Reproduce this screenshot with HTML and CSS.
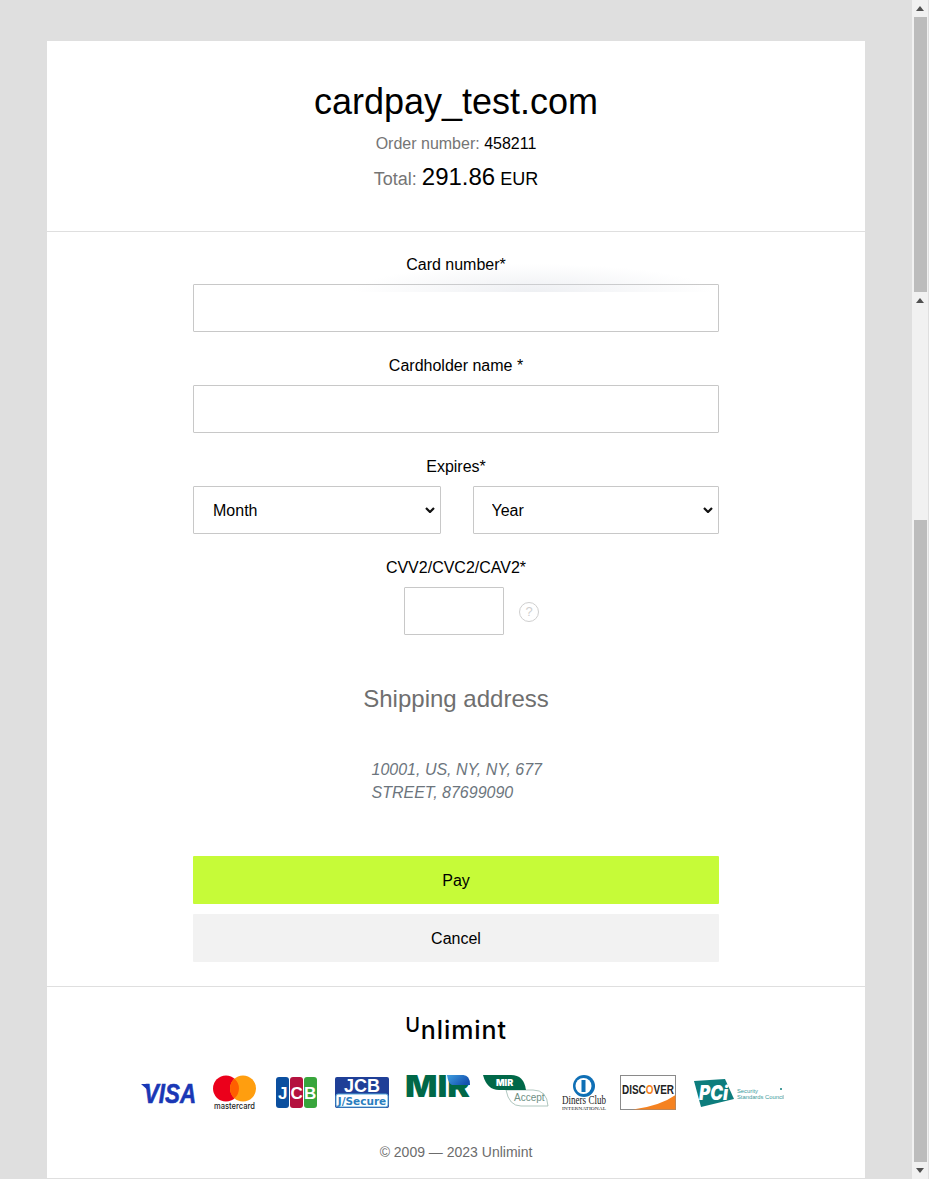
FILE: index.html
```html
<!DOCTYPE html>
<html lang="en">
<head>
    <meta charset="UTF-8">
    <meta name="viewport" content="width=device-width, initial-scale=1.0">
    <title>Unlimint</title>
    <link rel="stylesheet" href="styles.css">
</head>
<body>
    <main class="page">
        <div class="card">
            <header class="head">
                <h1 class="merchant">cardpay_test.com</h1>
                <p class="order"><span class="muted">Order number:</span> 458211</p>
                <p class="total"><span class="muted">Total:</span> <span class="amount">291.86</span> EUR</p>
            </header>

            <form class="pay-form">
                <div class="glow"></div>

                <div class="field">
                    <label class="label" for="card">Card number*</label>
                    <input class="input" type="text" id="card">
                </div>

                <div class="field">
                    <label class="label" for="holder">Cardholder name *</label>
                    <input class="input" type="text" id="holder">
                </div>

                <div class="field">
                    <label class="label" for="month">Expires*</label>
                    <div class="expires">
                        <select class="input select select-month" id="month"><option>Month</option></select>
                        <select class="input select select-year" id="year"><option>Year</option></select>
                    </div>
                </div>

                <div class="field">
                    <label class="label" for="cvv">CVV2/CVC2/CAV2*</label>
                    <div class="cvv-row">
                        <input class="input cvv" type="text" id="cvv">
                        <span class="help">?</span>
                    </div>
                </div>

                <h2 class="ship-title">Shipping address</h2>
                <address class="ship-address">10001, US, NY, NY, 677<br>STREET, 87699090</address>

                <button type="button" class="btn btn-pay">Pay</button>
                <button type="button" class="btn btn-cancel">Cancel</button>
            </form>

            <footer class="foot">
                <div class="brand"><span class="brand-u">U</span>nlimint</div>

                <div class="logos">
                    <svg class="logo" width="58" height="36" viewBox="0 0 58 36">
                        <path d="M0 9 H6 L9 17 Z" fill="#1a37b5"/>
                        <text x="3" y="28" class="t-visa" textLength="52" lengthAdjust="spacingAndGlyphs">VISA</text>
                    </svg>
                    <svg class="logo" width="51" height="36" viewBox="0 0 51 36">
                        <circle cx="14" cy="13.5" r="13" fill="#eb001b"/>
                        <circle cx="31" cy="13.5" r="13" fill="#ff9e0f"/>
                        <path d="M22.5 3.7 a13 13 0 0 1 0 19.6 a13 13 0 0 1 0 -19.6Z" fill="#ff5f00"/>
                        <text x="2" y="34" class="t-mc" textLength="41" lengthAdjust="spacingAndGlyphs">mastercard</text>
                    </svg>
                    <svg class="logo" width="46" height="36" viewBox="0 0 46 36">
                        <rect x="0" y="2" width="13" height="31" rx="3" fill="#0b4f9f"/>
                        <rect x="14" y="2" width="13" height="31" rx="3" fill="#b4123f"/>
                        <rect x="28" y="2" width="13" height="31" rx="3" fill="#38a53c"/>
                        <text x="2" y="23.5" class="t-jcb">J</text>
                        <text x="14.5" y="23.5" class="t-jcb">C</text>
                        <text x="28" y="23.5" class="t-jcb">B</text>
                    </svg>
                    <svg class="logo" width="57" height="36" viewBox="0 0 57 36">
                        <rect x="0" y="2" width="54" height="31" rx="2" fill="#1f3f97"/>
                        <rect x="1" y="19" width="52" height="13" rx="2" fill="#fff" stroke="#4fa5d8"/>
                        <text x="27" y="17" class="t-jcbs">JCB</text>
                        <text x="27" y="29.5" class="t-jcbs2">J/Secure</text>
                    </svg>
                    <svg class="logo" width="65" height="36" viewBox="0 0 65 36">
                        <defs>
                            <linearGradient id="mir-band" x1="0" y1="0" x2="1" y2="0.5">
                                <stop offset="0" stop-color="#3fa0e0"/>
                                <stop offset="1" stop-color="#1450b0"/>
                            </linearGradient>
                        </defs>
                        <text x="0" y="22" class="t-mir" textLength="65" lengthAdjust="spacingAndGlyphs">MIR</text>
                        <path d="M42 0 H58 Q65 0 65 10 H47 Q43 8 42 0 Z" fill="url(#mir-band)"/>
                    </svg>
                    <svg class="logo" width="66" height="36" viewBox="0 0 66 36">
                        <path d="M23 15 H50 Q64 15 65 31 H38 Q26 31 23 15Z" fill="#fff" stroke="#9cb9ae" stroke-width="0.8"/>
                        <path d="M0 0 H28 Q41 0 43 15 H16 Q4 15 0 0Z" fill="#006848"/>
                        <text x="13" y="11" class="t-mirs">MIR</text>
                        <text x="31" y="26" class="t-accept">Accept</text>
                    </svg>
                    <svg class="logo" width="45" height="36" viewBox="0 0 45 36">
                        <circle cx="22" cy="11" r="11" fill="#0f6fb5"/>
                        <circle cx="21.5" cy="11" r="8" fill="#fff"/>
                        <rect x="19.5" y="5" width="4" height="12" fill="#0f6fb5"/>
                        <text x="0" y="29" class="t-diners" textLength="44" lengthAdjust="spacingAndGlyphs">Diners Club</text>
                        <text x="0" y="34.5" class="t-intl" textLength="44" lengthAdjust="spacingAndGlyphs">INTERNATIONAL</text>
                    </svg>
                    <svg class="logo" width="56" height="36" viewBox="0 0 56 36">
                        <rect x="0.5" y="0.5" width="55" height="34" fill="#fff" stroke="#8a8a8a"/>
                        <path d="M13 34.5 Q40 31 55.5 20 V34.5 Z" fill="#f58220"/>
                        <text x="2" y="19" class="t-disc" textLength="52" lengthAdjust="spacingAndGlyphs">DISC<tspan fill="#f58220">O</tspan>VER</text>
                    </svg>
                    <svg class="logo" width="95" height="36" viewBox="0 0 95 36">
                        <path d="M5 6 L36 4 L45 24 L12 32 Z" fill="#0d7d7d"/>
                        <text x="10" y="25" class="t-pci" textLength="29" lengthAdjust="spacingAndGlyphs">PCi</text>
                        <text x="48" y="18" class="t-pcis">Security</text>
                        <text x="48" y="24" class="t-pcis">Standards Council</text>
                        <circle cx="92" cy="14" r="1" fill="#0d7d7d"/>
                    </svg>
                </div>

                <p class="copy">© 2009 — 2023 Unlimint</p>
            </footer>
        </div>
    </main>

    <div class="scroll">
        <div class="arrow-up top"></div>
        <div class="thumb thumb-a"></div>
        <div class="scroll-btn"><div class="arrow-up"></div></div>
        <div class="track"></div>
        <div class="thumb thumb-b"></div>
        <div class="scroll-btn bottom"><div class="arrow-down"></div></div>
    </div>
</body>
</html>
```

FILE: styles.css
```css
html, body {
    height: 1179px;
    margin: 0;
    overflow: hidden;
}

body {
    display: flex;
    background-color: #dfdfdf;
    font-family: "Liberation Sans", Arial, sans-serif;
    color: #000;
}

p, h1, h2 {
    margin: 0;
    font-weight: 400;
}

.page {
    width: 912px;
    padding: 41px 0 1px 47px;
    box-sizing: border-box;
}

.card {
    width: 818px;
    height: 1137px;
    background-color: #fff;
}

.head {
    height: 191px;
    box-sizing: border-box;
    padding-top: 38px;
    text-align: center;
    border-bottom: 1px solid #dfdfdf;
}

.merchant {
    font-size: 36px;
    line-height: 46px;
}

.order {
    font-size: 16px;
    line-height: 24px;
    margin-top: 7px;
}

.total {
    font-size: 18px;
    line-height: 30px;
    margin-top: 6px;
}

.amount {
    font-size: 24px;
}

.muted {
    color: #757575;
}

.pay-form {
    position: relative;
    width: 526px;
    margin: 0 auto;
    padding-top: 23px;
}

.glow {
    position: absolute;
    left: 160px;
    top: 30px;
    width: 360px;
    height: 30px;
    overflow: hidden;
    z-index: 2;
    pointer-events: none;
    background: radial-gradient(ellipse 180px 28px at 50% 100%, rgba(214, 218, 226, 0.42), rgba(255, 255, 255, 0));
}

.field {
    margin-bottom: 24px;
}

.label {
    display: block;
    font-size: 16px;
    line-height: 20px;
    margin-bottom: 9px;
    text-align: center;
}

.input {
    display: block;
    width: 100%;
    height: 48px;
    box-sizing: border-box;
    border: 1px solid #c8c8c8;
    border-radius: 1px;
    background-color: #fff;
    font-family: "Liberation Sans", Arial, sans-serif;
    font-size: 16px;
    color: #000;
}

.expires {
    display: flex;
    gap: 32px;
}

.select {
    appearance: none;
    -webkit-appearance: none;
    flex: 1;
    width: 247px;
    background-image: url("data:image/svg+xml,%3Csvg xmlns='http://www.w3.org/2000/svg' width='10' height='6'%3E%3Cpath d='M1 1l4 4 4-4' fill='none' stroke='%23111' stroke-width='2.2'/%3E%3C/svg%3E");
    background-repeat: no-repeat;
    background-position: right 5px center;
}

.select-month {
    padding-left: 19px;
}

.select-year {
    padding-left: 18px;
}

.cvv-row {
    display: flex;
    align-items: center;
    padding-left: 211px;
    gap: 15px;
}

.cvv {
    width: 100px;
}

.help {
    width: 20px;
    height: 20px;
    margin-top: 2px;
    box-sizing: border-box;
    border: 1px solid #cfcfcf;
    border-radius: 50%;
    color: #cfcfcf;
    font-size: 13px;
    line-height: 18px;
    text-align: center;
}

.ship-title {
    margin-top: 50px;
    font-size: 24px;
    line-height: 28px;
    color: #6f6f6f;
    text-align: center;
}

.ship-address {
    width: 170px;
    margin: 45px auto 0;
    padding-left: 1px;
    font-size: 16px;
    line-height: 23px;
    color: #6c757d;
    white-space: nowrap;
}

.btn {
    display: block;
    width: 100%;
    height: 48px;
    padding-top: 3px;
    border: 0;
    border-radius: 1px;
    font-family: "Liberation Sans", Arial, sans-serif;
    font-size: 16px;
    color: #000;
}

.btn-pay {
    margin-top: 52px;
    background-color: #c6fb38;
}

.btn-cancel {
    margin-top: 10px;
    background-color: #f2f2f2;
}

.foot {
    margin-top: 24px;
    border-top: 1px solid #dfdfdf;
}

.brand {
    margin-top: 28px;
    height: 30px;
    font-family: "Inter", sans-serif;
    font-weight: 500;
    font-size: 25px;
    line-height: 30px;
    letter-spacing: 0.9px;
    text-align: center;
}

.brand-u {
    font-size: 20px;
    position: relative;
    top: -7px;
}

.logos {
    display: flex;
    gap: 13px;
    margin-top: 30px;
    padding-left: 94px;
}

.logo {
    display: block;
    flex: none;
}

.copy {
    margin-top: 31px;
    font-size: 14px;
    line-height: 20px;
    color: #6c6c6c;
    text-align: center;
}

/* logo texts */
.t-visa { font: italic 700 27px "Liberation Sans", sans-serif; fill: #1a37b5; stroke: #1a37b5; stroke-width: 0.6px; }
.t-mc { font: 500 9px "Inter", sans-serif; fill: #222; }
.t-jcb { font: 700 17px "Liberation Sans", sans-serif; fill: #fff; }
.t-jcbs { font: 700 18px "Liberation Sans", sans-serif; fill: #fff; text-anchor: middle; }
.t-jcbs2 { font: 700 10.5px "DejaVu Sans", sans-serif; fill: #2a7fc0; text-anchor: middle; }
.t-mir { font: 900 30px "Inter", sans-serif; fill: #006848; }
.t-mirs { font: 900 9px "Inter", sans-serif; fill: #fff; }
.t-accept { font: 400 10px "Liberation Sans", sans-serif; fill: #6f8f84; }
.t-diners { font: 400 12px "Liberation Serif", serif; fill: #222; }
.t-intl { font: 400 5px "Liberation Serif", serif; fill: #222; }
.t-disc { font: 700 12.5px "Liberation Sans", sans-serif; fill: #222; }
.t-pci { font: italic 900 20px "Inter", sans-serif; fill: #fff; }
.t-pcis { font: 400 5.8px "Liberation Sans", sans-serif; fill: #3c9a9a; }

/* fake page scrollbar, two stitched frames */
.scroll {
    width: 16px;
    height: 1179px;
    background-color: #f1f1f1;
    display: flex;
    flex-direction: column;
    align-items: center;
}

.top {
    margin: 6px 0 6px;
}

.thumb {
    width: 13px;
    background-color: #bcbcbc;
}

.thumb-a {
    height: 275px;
}

.thumb-b {
    height: 642px;
}

.scroll-btn {
    height: 16px;
    width: 16px;
    display: flex;
    align-items: center;
    justify-content: center;
}

.track {
    flex: 1;
}

.bottom {
    padding-bottom: 1px;
}

.arrow-up {
    width: 0;
    height: 0;
    border-left: 4px solid transparent;
    border-right: 4px solid transparent;
    border-bottom: 5px solid #505050;
}

.arrow-down {
    width: 0;
    height: 0;
    border-left: 4px solid transparent;
    border-right: 4px solid transparent;
    border-top: 5px solid #505050;
}
```
